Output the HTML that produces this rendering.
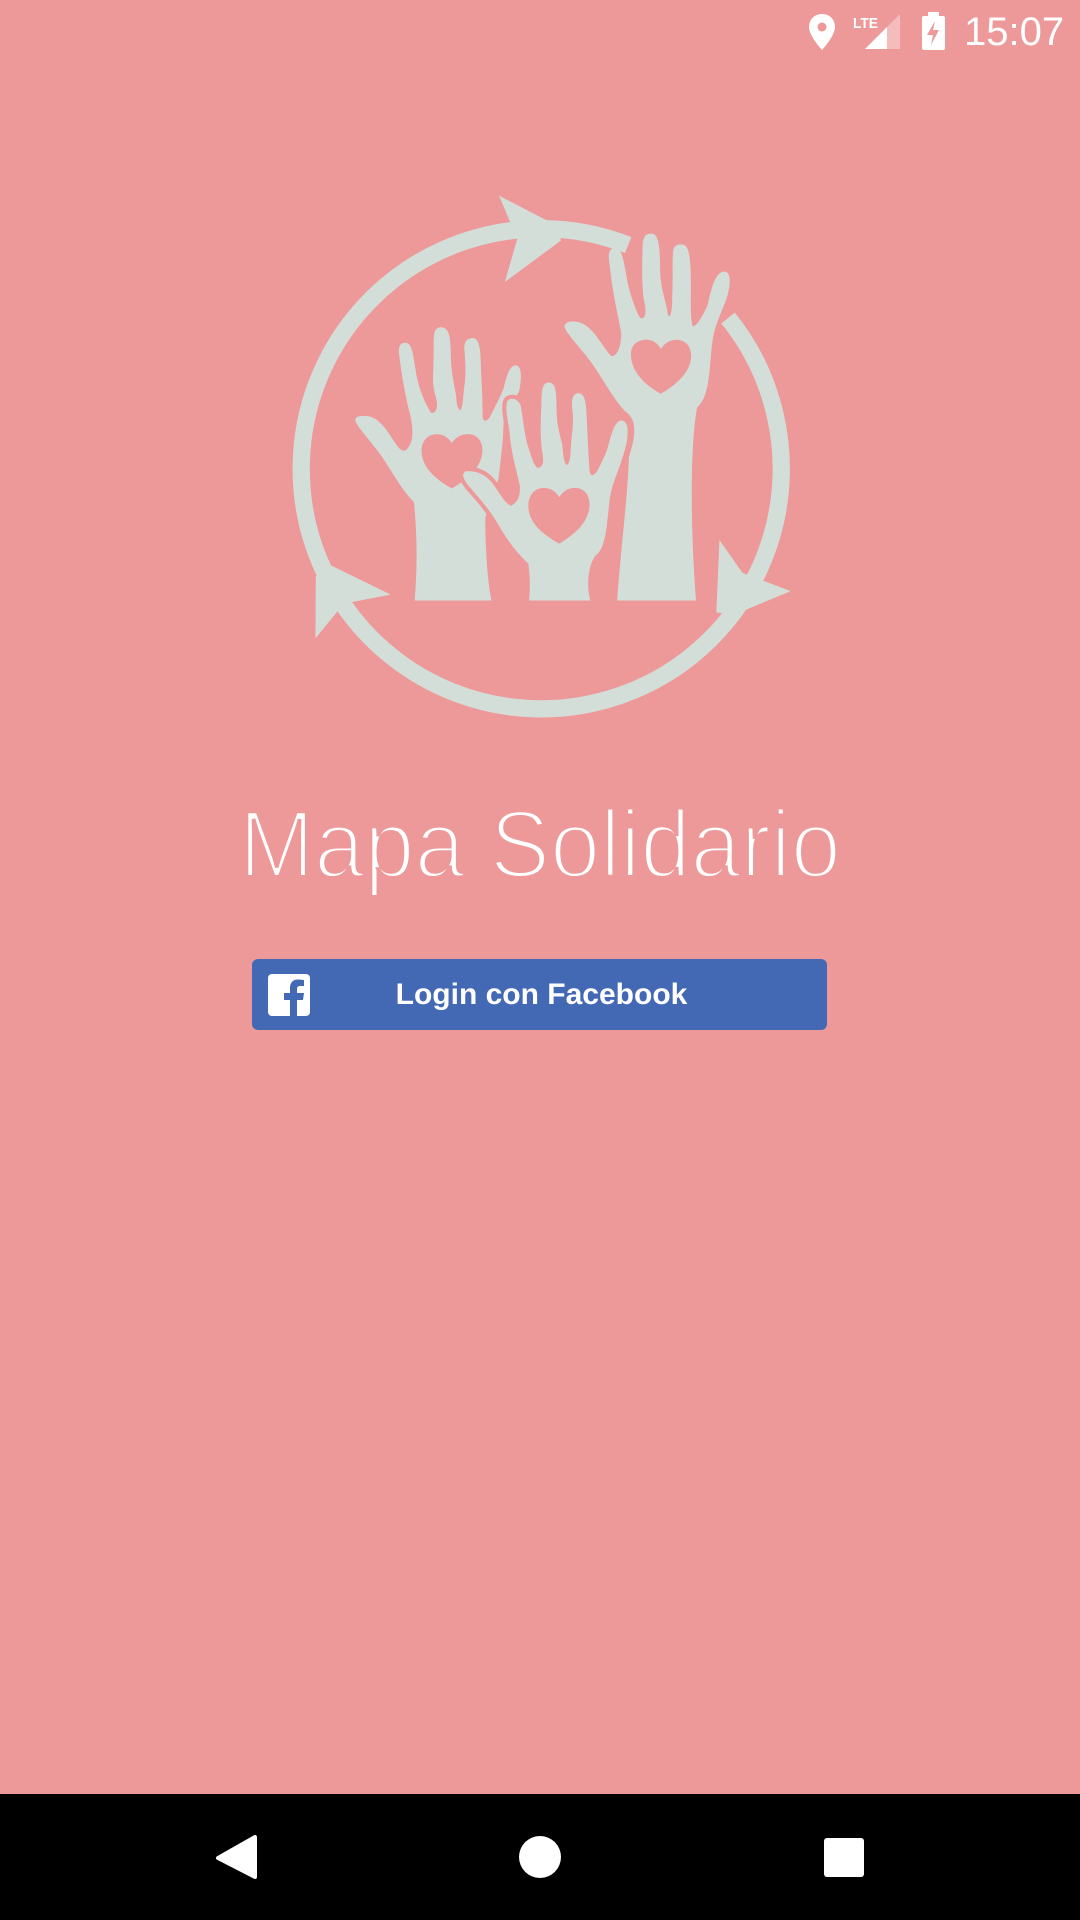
<!DOCTYPE html>
<html><head><meta charset="utf-8"><style>
html,body{margin:0;padding:0}
body{width:1080px;height:1920px;background:#ed999a;position:relative;overflow:hidden;font-family:"Liberation Sans",sans-serif}
.btn{position:absolute;left:252px;top:959px;width:575px;height:71px;background:#4469b4;border-radius:6px}
.btn span{position:absolute;left:0;right:0;top:0;line-height:71px;text-align:center;color:#fff;font-weight:bold;font-size:30px;padding-left:4px}
.fb{position:absolute;left:16px;top:15px;width:42px;height:42px;background:#fff;border-radius:4px;overflow:hidden}
.time{position:absolute;left:964px;top:10px;color:#fff;font-size:40px}
</style></head><body>
<svg width="1080" height="1920" style="position:absolute;left:0;top:0">
<g transform="translate(270,182) scale(0.3444)" fill="#d4ded9">
<path d="M1330,395 A697,697 0 1 1 1040,183" fill="none" stroke="#d4ded9" stroke-width="50"/>
<polygon points="665,40 830,125 845,170 682,290 718,165"/>
<polygon points="133,1145 170,1110 350,1198 237,1220 195,1248 132,1325"/>
<polygon points="1305,1040 1372,1135 1512,1188 1350,1255 1296,1250"/>
<path d="M420,1215 C430,1100 425,1000 418,930 C380,890 360,850 330,805 C300,760 260,720 248,695 C245,680 260,678 285,680 C320,685 345,730 365,760 C375,775 385,785 395,778 C415,760 418,730 408,680 C395,630 385,580 375,500 C372,475 380,466 395,467 C412,470 415,495 425,560 C435,610 450,640 467,670 C480,672 488,660 484,635 C475,600 472,590 474,550 C476,500 474,470 476,445 C478,425 490,420 500,422 C520,425 524,450 525,500 C526,570 540,600 542,640 C545,660 550,665 555,660 C562,640 560,620 566,580 C570,540 566,510 564,480 C565,460 575,453 590,453 C608,455 612,490 612,530 C614,580 618,640 617,680 C620,700 630,695 640,680 C660,640 670,620 678,600 C688,560 695,535 712,532 C730,532 732,560 724,605 C720,620 700,640 680,660 L676,750 L664,860 L625,975 C625,1050 630,1150 643,1215 Z"/>
<path fill="#ed999a" d="M528,890 C475,860 440,825 440,780 C440,750 460,732 485,732 C505,732 520,745 528,758 C536,745 552,732 575,732 C600,732 617,750 617,780 C615,825 580,860 528,890 Z"/>
<path d="M1008,1215 C1020,1050 1040,900 1042,800 C1060,740 1070,690 1030,665 C990,620 960,560 930,520 C900,480 860,440 855,420 C855,405 880,400 905,410 C940,425 960,470 990,505 C1010,510 1020,470 1020,440 C1010,380 995,330 985,230 C980,200 990,190 1005,192 C1025,195 1028,240 1040,300 C1050,340 1065,380 1075,395 C1090,400 1095,380 1085,340 C1080,300 1080,250 1082,190 C1082,160 1090,148 1110,150 C1130,155 1132,190 1133,260 C1135,320 1150,340 1155,385 C1160,395 1168,390 1168,330 C1170,290 1168,240 1170,205 C1172,185 1180,180 1200,182 C1218,185 1222,230 1222,300 C1222,360 1220,400 1228,420 C1240,415 1250,400 1270,360 C1280,320 1290,260 1320,260 C1340,262 1338,300 1325,340 C1310,380 1290,420 1285,460 C1275,530 1280,620 1240,655 C1220,760 1220,1000 1237,1215 Z"/>
<path fill="#ed999a" d="M1135,615 C1080,585 1048,545 1048,500 C1048,470 1070,458 1095,458 C1115,458 1128,472 1135,485 C1142,472 1158,458 1180,458 C1205,458 1223,475 1223,505 C1222,550 1185,585 1135,615 Z"/>
<path stroke="#ed999a" stroke-width="24" paint-order="stroke" d="M752,1215 C756,1180 755,1140 750,1108 C710,1070 690,1040 660,990 C630,940 600,910 575,880 C560,860 555,845 570,840 C595,838 625,845 650,880 C670,910 685,935 700,940 C720,930 728,910 725,880 C715,830 700,790 695,720 C688,680 682,650 690,635 C700,625 720,628 728,650 C735,690 740,740 750,770 C760,800 768,830 780,830 C795,825 795,810 790,780 C785,750 785,700 788,650 C788,600 792,582 810,582 C830,582 832,610 832,660 C832,700 840,730 848,760 C852,800 855,820 862,822 C870,818 872,800 873,780 C875,740 880,720 880,680 C875,640 874,615 895,613 C915,613 918,640 920,690 C922,740 925,800 928,840 C932,860 942,850 950,840 C960,820 970,800 978,780 C990,740 998,695 1020,692 C1040,695 1042,720 1035,760 C1020,820 1000,860 990,900 C978,960 982,1060 945,1085 C920,1120 920,1180 930,1215 Z"/>
<path fill="#ed999a" d="M840,1050 C785,1020 750,985 750,940 C750,908 770,888 795,888 C818,888 832,902 840,915 C848,902 862,888 885,888 C910,888 928,905 928,938 C926,985 890,1020 840,1050 Z"/>
</g>
<text x="540" y="877" text-anchor="middle" font-family="Liberation Sans, sans-serif" font-size="96" fill="#fff" stroke="#ed999a" stroke-width="4" textLength="602" lengthAdjust="spacingAndGlyphs">Mapa Solidario</text>
<path d="M822,14 C814,14 809,20 809,27 C809,36 822,50 822,50 C822,50 835,36 835,27 C835,20 830,14 822,14 Z" fill="#fff"/>
<circle cx="822" cy="27" r="4.5" fill="#ed999a"/>
<text x="853" y="28" font-family="Liberation Sans, sans-serif" font-size="15" font-weight="bold" fill="#fff" textLength="25" lengthAdjust="spacingAndGlyphs">LTE</text>
<polygon points="900,14 900,49 865,49" fill="#f5bcbc"/>
<polygon points="887,27 887,49 865,49" fill="#fff"/>
<rect x="922" y="16" width="23" height="34" rx="2" fill="#fff"/>
<rect x="928" y="12" width="11" height="5" fill="#fff"/>
<polygon points="935,21 927,35 933,35 931,45 939,30 933,30" fill="#ed999a"/>
<rect x="0" y="1794" width="1080" height="126" fill="#000"/>
<polygon points="255,1837 255,1877 218,1858" fill="#fff" stroke="#fff" stroke-width="4" stroke-linejoin="round"/>
<circle cx="540" cy="1857" r="21" fill="#fff"/>
<rect x="824" y="1838" width="40" height="39" rx="3" fill="#fff"/>
</svg>
<div class="time">15:07</div>
<div class="btn"><div class="fb"><svg width="42" height="42"><path d="M29,42 V26 H35 L36,19 H29 V15 C29,13 30,12 32,12 H36 V6 C35,6 32,5.5 30,5.5 C25,5.5 22,8.5 22,14 V19 H16 V26 H22 V42 Z" fill="#4469b4"/></svg></div><span>Login con Facebook</span></div>
</body></html>
